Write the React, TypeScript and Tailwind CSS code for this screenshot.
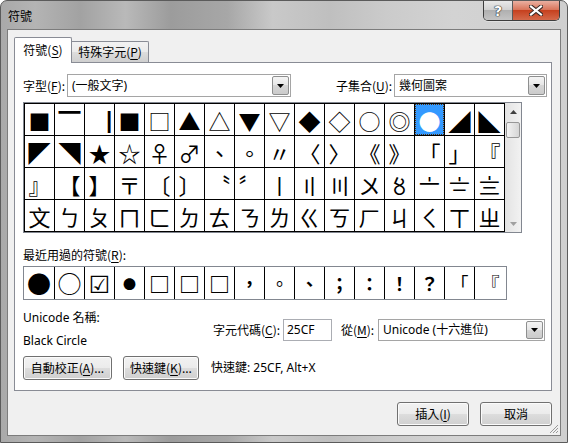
import React from "react";

const ui = "font-['Noto_Sans','Noto_Sans_CJK_TC',sans-serif] text-[12px] text-black";
const sym = "font-['Noto_Sans_CJK_TC','DejaVu_Sans',sans-serif]";

const rows: string[][] = [
  ["■", "▔", "▕", "■", "□", "▲", "△", "▼", "▽", "◆", "◇", "○", "◎", "●", "◢", "◣"],
  ["◤", "◥", "★", "☆", "♀", "♂", "、", "。", "〃", "〈", "〉", "《", "》", "「", "」", "『"],
  ["』", "【", "】", "〒", "〔", "〕", "〝", "〞", "〡", "〢", "〣", "〤", "〥", "〦", "〧", "〨"],
  ["文", "ㄅ", "ㄆ", "ㄇ", "ㄈ", "ㄉ", "ㄊ", "ㄋ", "ㄌ", "ㄍ", "ㄎ", "ㄏ", "ㄐ", "ㄑ", "ㄒ", "ㄓ"],
];

const recent: { c: string; size: string }[] = [
  { c: "●", size: "text-[24px]" },
  { c: "○", size: "text-[24px]" },
  { c: "☑", size: "text-[24px] font-bold" },
  { c: "●", size: "text-[13px]" },
  { c: "□", size: "text-[21px] font-bold" },
  { c: "□", size: "text-[21px] font-bold" },
  { c: "□", size: "text-[21px] font-bold" },
  { c: "，", size: "text-[18px] font-bold" },
  { c: "。", size: "text-[18px]" },
  { c: "、", size: "text-[18px] font-bold" },
  { c: "；", size: "text-[18px] font-bold" },
  { c: "：", size: "text-[18px] font-bold" },
  { c: "！", size: "text-[18px] font-bold" },
  { c: "？", size: "text-[18px] font-bold" },
  { c: "「", size: "text-[18px]" },
  { c: "『", size: "text-[18px]" },
];

const btn =
  "h-[24px] rounded-[3px] border border-[#707070] bg-[linear-gradient(180deg,#f2f2f2_0%,#ebebeb_50%,#dddddd_50%,#cfcfcf_100%)] shadow-[inset_0_0_0_1px_#fbfbfb] flex items-center justify-center";

function Arrow() {
  return (
    <svg width="7" height="4" viewBox="0 0 7 4">
      <path d="M0 0h7L3.5 4z" fill="#000" />
    </svg>
  );
}

function Combo({ w, h, text }: { w: string; h: string; text: string }) {
  return (
    <div className={`${w} ${h} border border-[#a5a5a5] bg-white flex items-stretch p-px`}>
      <span className="flex-1 pl-[3px] flex items-center whitespace-nowrap">{text}</span>
      <div className="w-[17px] border border-[#8e8f8f] rounded-[2px] bg-[linear-gradient(180deg,#f4f4f4_0%,#e6e6e6_50%,#d6d6d6_50%,#cbcbcb_100%)] flex items-center justify-center">
        <Arrow />
      </div>
    </div>
  );
}

function Key({ k }: { k: string }) {
  return <span className="underline underline-offset-2">{k}</span>;
}

export default function App() {
  return (
    <div
      className={`${ui} w-[568px] h-[443px] border border-[#5b5b5b] rounded-t-[7px] flex flex-col px-[6px] pb-[6px] bg-[linear-gradient(90deg,#a9a9a9_0%,#b4b4b4_6%,#a2a2a2_14%,#b9b9b9_22%,#9c9c9c_30%,#a7a7a7_40%,#c9c9c9_48%,#bfbfbf_58%,#cbcbcb_68%,#d3d3d3_80%,#cfcfcf_100%)] overflow-hidden`}
    >
      {/* title bar */}
      <div className="h-[28px] flex justify-between">
        <div className="self-center pl-[1px] pt-[1px] font-['Noto_Sans_CJK_TC',sans-serif]">符號</div>
        <div className="flex self-start mr-px h-[20px] rounded-b-[5px] border border-t-0 border-[#3d3d3d] overflow-hidden shadow-[0_1px_0_#e0e0e0]">
          <div className="w-[29px] h-full border-r border-[#5a5a5a] bg-[linear-gradient(180deg,#e9e9e9_0%,#d2d2d2_45%,#b0b0b0_50%,#c4c4c4_100%)] flex items-center justify-center">
            <span className="font-['DejaVu_Sans',sans-serif] font-bold text-[14px] leading-none text-white [text-shadow:0_0_1px_#222,0_0_1px_#222,0_0_1px_#222]">?</span>
          </div>
          <div className="w-[46px] h-full bg-[linear-gradient(180deg,#eab0a1_0%,#d9765c_45%,#c6411f_50%,#d4694a_100%)] flex items-center justify-center">
            <svg width="14" height="11" viewBox="0 0 14 11">
              <path d="M2 1.5L12 9.5M12 1.5L2 9.5" stroke="#3a2a26" strokeWidth="4.2" strokeLinecap="square" />
              <path d="M2 1.5L12 9.5M12 1.5L2 9.5" stroke="#fff" strokeWidth="2.2" strokeLinecap="square" />
            </svg>
          </div>
        </div>
      </div>

      {/* client area */}
      <div className="relative flex-1 border border-[#7c7c7c] bg-[#f0f0f0] flex flex-col">
        {/* tabs */}
        <div className="flex items-end pl-[6px] pt-[7px]">
          <div className="relative z-10 -mb-px h-[26px] w-[58px] border border-b-0 border-[#898c95] rounded-t-[2px] bg-white flex items-center justify-center pb-[2px] font-['Noto_Sans_CJK_TC',sans-serif]">
            符號(<Key k="S" />)
          </div>
          <div className="h-[21px] w-[77px] border border-l-0 border-b-0 border-[#898c95] rounded-tr-[2px] bg-[linear-gradient(180deg,#f2f2f2_0%,#ebebeb_50%,#dddddd_50%,#cfcfcf_100%)] flex items-center justify-center font-['Noto_Sans_CJK_TC',sans-serif]">
            特殊字元(<Key k="P" />)
          </div>
        </div>

        {/* tab panel */}
        <div className="ml-[6px] w-[538px] h-[329px] border border-[#898c95] bg-white pl-[8px] pr-[4px] pt-[11px] flex flex-col">
          <div className="flex items-center h-[23px]">
            <span className="w-[44px] font-['Noto_Sans_CJK_TC',sans-serif]">字型(<Key k="F" />):</span>
            <Combo w="w-[224px]" h="h-[23px]" text="(一般文字)" />
            <span className="ml-auto w-[58px] font-['Noto_Sans_CJK_TC',sans-serif]">子集合(<Key k="U" />):</span>
            <Combo w="w-[153px]" h="h-[23px]" text="幾何圖案" />
          </div>

          {/* symbol grid */}
          <div className="mt-[5px] w-[499px] h-[131px] border border-[#828790] flex">
            <div className={`${sym} grid grid-cols-[repeat(16,29px)] grid-rows-[repeat(4,31px)] gap-px p-px bg-black w-[481px] h-[129px]`}>
              {rows.flatMap((r, ri) =>
                r.map((c, ci) => {
                  const sel = ri === 0 && ci === 13;
                  return (
                    <div
                      key={`${ri}-${ci}`}
                      className={
                        sel
                          ? "bg-[#3399ff] text-white border border-dotted border-[#5a3000] flex items-center justify-center text-[22px] leading-none"
                          : "bg-white flex items-center justify-center text-[22px] leading-none"
                      }
                    >
                      {c}
                    </div>
                  );
                })
              )}
            </div>
            <div className="w-[16px] h-[129px] bg-[linear-gradient(90deg,#e3e3e3,#f2f2f2)] flex flex-col items-center">
              <div className="h-[17px] flex items-center justify-center">
                <svg width="7" height="4" viewBox="0 0 7 4">
                  <path d="M0 4h7L3.5 0z" fill="#404040" />
                </svg>
              </div>
              <div className="mt-[2px] w-[14px] h-[16px] rounded-[2px] border border-[#979797] bg-[linear-gradient(90deg,#f4f4f4,#e4e4e4_50%,#d6d6d6)]" />
              <div className="flex-1" />
              <div className="h-[17px] flex items-center justify-center">
                <svg width="7" height="4" viewBox="0 0 7 4">
                  <path d="M0 0h7L3.5 4z" fill="#a0a0a0" />
                </svg>
              </div>
            </div>
          </div>

          <div className="mt-[14px] h-[16px] leading-[16px] font-['Noto_Sans_CJK_TC',sans-serif]">
            最近用過的符號(<Key k="R" />):
          </div>

          {/* recently used */}
          <div className={`${sym} mt-[3px] w-[484px] h-[34px] border border-[#828790] flex`}>
            {recent.map((r, i) => (
              <div
                key={i}
                className={`${i === 0 ? "w-[30px]" : i === 15 ? "flex-1 border-l border-black" : "w-[30px] border-l border-black"} ${r.size} leading-none flex items-center justify-center`}
              >
                {r.c}
              </div>
            ))}
          </div>

          {/* code info */}
          <div className="mt-[10px] flex">
            <div className="w-[190px] flex flex-col">
              <div className="h-[16px] leading-[16px]">Unicode 名稱:</div>
              <div className="mt-[7px] h-[16px] leading-[16px]">Black Circle</div>
            </div>
            <div className="mt-[9px] flex items-center h-[22px]">
              <span className="w-[70px] font-['Noto_Sans_CJK_TC',sans-serif]">字元代碼(<Key k="C" />):</span>
              <div className="w-[49px] h-[22px] border border-[#abadb3] bg-white pl-[3px] flex items-center">25CF</div>
              <span className="ml-[9px] w-[37px] font-['Noto_Sans_CJK_TC',sans-serif]">從(<Key k="M" />):</span>
              <Combo w="w-[167px]" h="h-[22px]" text="Unicode (十六進位)" />
            </div>
          </div>

          <div className="mt-[7px] flex items-center">
            <div className={`${btn} w-[89px] font-['Noto_Sans_CJK_TC',sans-serif]`}>
              自動校正(<Key k="A" />)...
            </div>
            <div className={`${btn} ml-[11px] w-[76px] font-['Noto_Sans_CJK_TC',sans-serif]`}>
              快速鍵(<Key k="K" />)...
            </div>
            <span className="ml-[12px]">快速鍵: 25CF, Alt+X</span>
          </div>
        </div>

        {/* dialog buttons */}
        <div className="mt-[11px] flex justify-end pr-[8px] gap-[11px]">
          <div className={`${btn} w-[72px] border-[#3c7fb1] shadow-[inset_0_0_0_1px_#9fe3fb] bg-[linear-gradient(180deg,#eaf6fd_0%,#d9f0fc_50%,#bee6fd_50%,#a7d9f5_100%)] font-['Noto_Sans_CJK_TC',sans-serif]`}>
            插入(<Key k="I" />)
          </div>
          <div className={`${btn} w-[72px] font-['Noto_Sans_CJK_TC',sans-serif]`}>取消</div>
        </div>

        {/* size grip */}
        <svg className="absolute right-[1px] bottom-[1px]" width="10" height="10" viewBox="0 0 10 10">
          <path d="M9 1L1 9M9 4L4 9M9 7L7 9" stroke="#9a9a9a" strokeWidth="1" />
        </svg>
      </div>
    </div>
  );
}
